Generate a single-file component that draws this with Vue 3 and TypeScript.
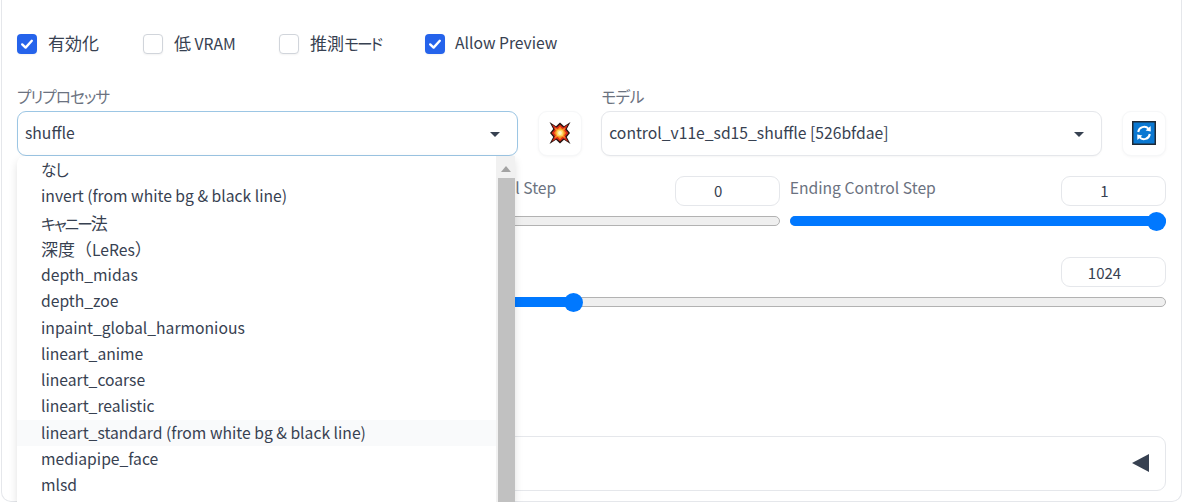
<script setup lang="ts">
interface Piece { big?: string; kana?: string; text?: string }
const checks: (Piece & { on: boolean; width: number })[] = [
  { big: '有効化', on: true, width: 126 },
  { big: '低', text: ' VRAM', on: false, width: 136 },
  { big: '推測', kana: 'モード', on: false, width: 146 },
  { text: 'Allow Preview', on: true, width: 140 },
]
const options: (Piece & { id: string; hover?: boolean })[] = [
  { id: 'none', kana: 'なし' },
  { id: 'invert', text: 'invert (from white bg & black line)' },
  { id: 'canny', kana: 'キャニー', big: '法' },
  { id: 'leres', big: '深度（', text: 'LeRes' },
  { id: 'midas', text: 'depth_midas' },
  { id: 'zoe', text: 'depth_zoe' },
  { id: 'inpaint', text: 'inpaint_global_harmonious' },
  { id: 'anime', text: 'lineart_anime' },
  { id: 'coarse', text: 'lineart_coarse' },
  { id: 'realistic', text: 'lineart_realistic' },
  { id: 'standard', text: 'lineart_standard (from white bg & black line)', hover: true },
  { id: 'face', text: 'mediapipe_face' },
  { id: 'mlsd', text: 'mlsd' },
]
</script>

<template>
  <div class="panel">
    <div class="checks">
      <label v-for="c in checks" :key="c.width" class="check" :style="{ width: c.width + 'px' }">
        <span class="box" :class="{ on: c.on }">
          <svg v-if="c.on" viewBox="0 0 20 20" width="20" height="20">
            <path d="M5.2 10.4 L8.6 13.6 L14.8 6.8" fill="none" stroke="#fff" stroke-width="2.4" stroke-linecap="round" stroke-linejoin="round" />
          </svg>
        </span>
        <span class="check-text"><span v-if="c.big" class="big">{{ c.big }}</span><span v-if="c.kana" class="kana tight">{{ c.kana }}</span><span v-if="c.text && !c.big" class="latin">{{ c.text }}</span><template v-else>{{ c.text }}</template></span>
      </label>
    </div>

    <div class="selects">
      <div class="group">
        <div class="field">
          <div class="label kana">プリプロセッサ</div>
          <div class="select focus">
            <span>shuffle</span>
            <i class="caret"></i>
            <div class="menu">
              <div class="list">
                <div v-for="o in options" :key="o.id" class="opt" :class="{ hover: o.hover }">
                  <template v-if="o.id === 'canny'"><span class="kana tight">{{ o.kana }}</span><span class="big">{{ o.big }}</span></template>
                  <template v-else-if="o.id === 'leres'"><span class="big">{{ o.big }}</span>{{ o.text }}<span class="big">）</span></template>
                  <template v-else-if="o.kana"><span class="kana">{{ o.kana }}</span></template>
                  <template v-else>{{ o.text }}</template>
                </div>
              </div>
              <div class="bar">
                <svg class="up" viewBox="0 0 10 6" width="10" height="6"><polygon points="5,0 10,6 0,6" fill="#a3a3a3" /></svg>
                <div class="thumb"></div>
              </div>
            </div>
          </div>
        </div>
        <button class="tool" type="button">
          <svg viewBox="0 0 22 24" width="22" height="24">
            <polygon points="0.5,1 7,5.2 11,1.5 15,5.2 21.5,1 17.8,8 21,12 17.8,16 21.5,23 15,18.8 11,22.5 7,18.8 0.5,23 4.2,16 1,12 4.2,8" fill="#241511" />
            <polygon points="2.8,3.2 7.6,6.6 11,3.4 14.4,6.6 19.2,3.2 16.4,8.4 19.4,12 16.4,15.6 19.2,20.8 14.4,17.4 11,20.6 7.6,17.4 2.8,20.8 5.6,15.6 2.6,12 5.6,8.4" fill="#d92c1a" />
            <polygon points="11,5.6 13.2,8 16.4,7 15.2,9.8 17,12 15.2,14.2 16.4,17 13.2,16 11,18.4 8.8,16 5.6,17 6.8,14.2 5,12 6.8,9.8 5.6,7 8.8,8" fill="#f9901f" />
            <circle cx="11" cy="12" r="3.6" fill="#fdd663" />
            <circle cx="11" cy="12" r="1.9" fill="#fff3c4" />
          </svg>
        </button>
      </div>
      <div class="group">
        <div class="field">
          <div class="label kana short">モデル</div>
          <div class="select">
            <span>control_v11e_sd15_shuffle [526bfdae]</span>
            <i class="caret"></i>
          </div>
        </div>
        <button class="tool" type="button">
          <svg viewBox="0 0 24 24" width="24" height="24">
            <rect x="0.75" y="0.75" width="22.5" height="22.5" fill="#0a78d2" stroke="#1f2a36" stroke-width="1.5" />
            <path d="M6.2 11 A6 6 0 0 1 16.6 7.8" fill="none" stroke="#fff" stroke-width="2" />
            <polygon points="18.6,5 18.8,10.6 13.6,9.6" fill="#fff" />
            <path d="M17.8 13 A6 6 0 0 1 7.4 16.2" fill="none" stroke="#fff" stroke-width="2" />
            <polygon points="5.4,19 5.2,13.4 10.4,14.4" fill="#fff" />
          </svg>
        </button>
      </div>
    </div>

    <div class="steps">
      <div></div>
      <div>
        <div class="head"><span class="label">Starting Control Step</span><span class="num">0</span></div>
        <div class="track"></div>
      </div>
      <div>
        <div class="head"><span class="label">Ending Control Step</span><span class="num">1</span></div>
        <div class="track"><div class="fill full"></div><div class="knob end"></div></div>
      </div>
    </div>

    <div class="res">
      <div class="head right"><span class="num wide">1024</span></div>
      <div class="track"><div class="fill" :style="{ width: '48.4%' }"></div><div class="knob" :style="{ left: '48.4%' }"></div></div>
    </div>

    <div class="mode"></div>

    <div class="accordion">
      <svg viewBox="0 0 17 18" width="17" height="18"><polygon points="0,9 17,0 17,18" fill="#374151" /></svg>
    </div>
  </div>
</template>

<style>
html, body { margin: 0; background: #fff; overflow: hidden; }
</style>

<style scoped>
.panel {
  box-sizing: border-box;
  width: 1181px;
  height: 502px;
  margin-left: 1px;
  padding: 34px 15px 0;
  border: 1px solid #e5e7eb;
  border-top: none;
  border-radius: 0 0 10px 10px;
  font-family: "Noto Sans CJK JP", "Noto Sans", sans-serif;
  font-size: 15.7px;
  color: #374151;
  background: #fff;
}
.checks { display: flex; height: 20px; align-items: center; }
.check { display: flex; align-items: center; gap: 11px; line-height: 20px; flex: none; white-space: nowrap; }
.check-text { position: relative; top: -1px; }
.latin { margin-left: -1px; }
.big { font-size: 17px; }
.kana { font-feature-settings: "palt"; letter-spacing: -1px; }
.kana.tight { letter-spacing: -1.9px; }
.box {
  box-sizing: border-box;
  width: 20px;
  height: 20px;
  border: 1px solid #d1d5db;
  border-radius: 4px;
  background: #fff;
  flex: none;
  box-shadow: 0 1px 2px rgba(0, 0, 0, .05);
}
.box.on { background: #2563eb; border: none; }
.box svg { display: block; }

.selects { display: flex; gap: 19.5px; margin-top: 33px; }
.group { flex: 1; display: flex; gap: 20px; align-items: flex-end; }
.field { flex: 1; min-width: 0; }
.label { color: #6b7280; line-height: 20px; }
.label.short { letter-spacing: -0.6px; }
.field .label { margin-bottom: 4px; }
.select {
  position: relative;
  box-sizing: border-box;
  height: 44.5px;
  padding: 0 7px 2px;
  display: flex;
  align-items: center;
  border: 1px solid #e5e7eb;
  border-radius: 9px;
  background: #fff;
  box-shadow: 0 1px 2px rgba(0, 0, 0, .04);
}
.select.focus { border-color: #9cc6e4; }
.caret {
  position: absolute;
  right: 17px;
  top: 20px;
  width: 0;
  height: 0;
  border-left: 5px solid transparent;
  border-right: 5px solid transparent;
  border-top: 5px solid #374151;
}
.menu {
  position: absolute;
  left: -1px;
  top: 44px;
  width: 498px;
  height: 346px;
  display: flex;
  overflow: hidden;
  background: #fff;
  border-radius: 8px 0 0 0;
  box-shadow: 0 4px 8px rgba(0, 0, 0, .12);
  z-index: 5;
}
.list { flex: 1; min-width: 0; padding-top: 1px; }
.opt { height: 26.25px; line-height: 26.25px; padding-left: 24px; white-space: nowrap; }
.opt.hover { background: #f9fafb; }
.bar { width: 19px; flex: none; background: #f1f1f1; display: flex; flex-direction: column; align-items: center; }
.up { margin-top: 10px; flex: none; }
.thumb { margin-top: 6px; margin-left: 2px; width: 17.5px; flex: 1; background: #c1c1c1; }
.tool {
  box-sizing: border-box;
  width: 44px;
  height: 44.5px;
  padding: 0;
  display: flex;
  align-items: center;
  justify-content: center;
  border: 1px solid #f6f7f8;
  border-radius: 9px;
  background: #fff;
  box-shadow: 0 1px 3px rgba(0, 0, 0, .04);
  flex: none;
}

.steps { display: grid; grid-template-columns: repeat(3, 1fr); gap: 10px; margin-top: 20.5px; }
.head { display: flex; justify-content: space-between; align-items: flex-start; }
.head.right { justify-content: flex-end; }
.head .label { padding-top: 2px; }
.num {
  box-sizing: border-box;
  width: 105px;
  height: 30px;
  padding-right: 18px;
  line-height: 28px;
  text-align: center;
  border: 1px solid #e5e7eb;
  border-radius: 9px;
  font-size: 15px;
  background: #fff;
}
.num.wide { line-height: 30px; }
.track {
  position: relative;
  box-sizing: border-box;
  height: 10px;
  margin-top: 10px;
  background: #efefef;
  border: 1px solid #b2b2b2;
  border-radius: 5px;
}
.fill { position: absolute; left: -1px; top: -1px; bottom: -1px; background: #0078ff; border-radius: 5px; }
.fill.full { right: -1px; }
.knob {
  position: absolute;
  top: 50%;
  width: 19px;
  height: 19px;
  margin: -9.5px 0 0 -9.5px;
  background: #0078ff;
  border-radius: 50%;
}
.knob.end { left: 100%; margin-left: -18px; }
.res { margin-top: 31px; }
.mode {
  box-sizing: border-box;
  width: 300px;
  height: 34px;
  margin-top: 71px;
  border: 1px solid #e5e7eb;
  border-radius: 8px;
}
.accordion {
  box-sizing: border-box;
  height: 55px;
  margin-top: 24px;
  padding: 0 16px 2px 0;
  display: flex;
  align-items: center;
  justify-content: flex-end;
  border: 1px solid #e5e7eb;
  border-radius: 9px;
}
</style>
